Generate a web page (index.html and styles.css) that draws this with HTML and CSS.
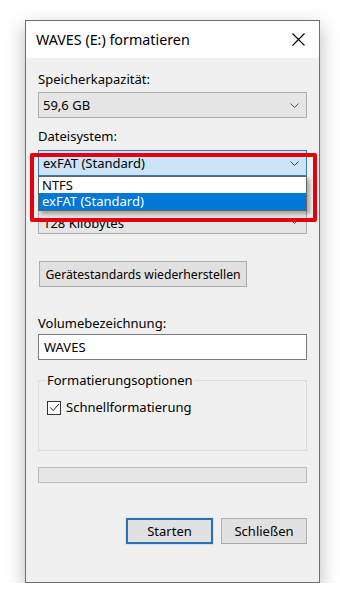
FILE: index.html
```html
<!DOCTYPE html>
<html lang="de">
<head>
<meta charset="utf-8">
<title>WAVES (E:) formatieren</title>
<link rel="stylesheet" href="styles.css">
</head>
<body>
<div class="window">
  <div class="titlebar">
    <span class="title">WAVES (E:) formatieren</span>
    <svg class="close" width="13" height="13" viewBox="0 0 13 13"><path d="M0.5 0.5 L12.5 12.5 M12.5 0.5 L0.5 12.5" stroke="#000" stroke-width="1.1" fill="none"/></svg>
  </div>
  <div class="content">
    <div class="label first">Speicherkapazität:</div>
    <div class="combo"><span>59,6 GB</span><svg class="chev" width="9" height="5" viewBox="0 0 9 5"><path d="M0.5 0.5 L4.5 4.5 L8.5 0.5" stroke="#555" fill="none"/></svg></div>

    <div class="label">Dateisystem:</div>
    <div class="combo-wrap">
      <div class="combo focused"><span>exFAT (Standard)</span><svg class="chev" width="9" height="5" viewBox="0 0 9 5"><path d="M0.5 0.5 L4.5 4.5 L8.5 0.5" stroke="#444" fill="none"/></svg></div>
      <ul class="dropdown">
        <li>NTFS</li>
        <li class="sel">exFAT (Standard)</li>
      </ul>
      <div class="highlight"></div>
    </div>

    <div class="label covered">Größe der Zuordnungseinheiten:</div>
    <div class="combo cluster"><span>128 Kilobytes</span><svg class="chev" width="9" height="5" viewBox="0 0 9 5"><path d="M0.5 0.5 L4.5 4.5 L8.5 0.5" stroke="#555" fill="none"/></svg></div>

    <button class="btn restore">Gerätestandards wiederherstellen</button>

    <div class="label vol">Volumebezeichnung:</div>
    <div class="input">WAVES</div>

    <fieldset class="group">
      <legend>Formatierungsoptionen</legend>
      <div class="check-row">
        <span class="checkbox"><svg width="11" height="11" viewBox="0 0 11 11"><path d="M1.2 5.4 L4.2 8.6 L10 1.8" stroke="#222" stroke-width="1" fill="none"/></svg></span>
        <span>Schnellformatierung</span>
      </div>
    </fieldset>

    <div class="progress"></div>

    <div class="actions">
      <button class="btn default">Starten</button>
      <button class="btn close-btn">Schließen</button>
    </div>
  </div>
</div>
</body>
</html>
```
FILE: styles.css
```css
html, body {
  margin: 0;
  padding: 0;
  background: #fff;
}
body {
  font-family: "Noto Sans", "Open Sans", sans-serif;
  font-size: 13px;
  color: #000;
  padding: 20px 0 0 25px;
}
.window {
  width: 295px;
  height: 563px;
  box-sizing: border-box;
  border: 1px solid #6e6e6e;
  background: #f0f0f0;
  box-shadow: 0 7px 18px rgba(0, 0, 0, 0.28);
}
.titlebar {
  height: 37px;
  background: #fff;
  display: flex;
  align-items: center;
  justify-content: space-between;
  padding: 0 14px 0 10px;
}
.title {
  font-size: 14.3px;
  line-height: 20px;
}
.close {
  display: block;
}
.content {
  padding: 13px 12px 0 12px;
}
.label {
  line-height: 17px;
  height: 17px;
  margin-top: 10px;
  white-space: nowrap;
}
.label.first {
  margin-top: 0;
}
.label.covered {
  visibility: hidden;
}
.combo {
  height: 26px;
  box-sizing: border-box;
  border: 1px solid #adadad;
  background: #e5e5e5;
  margin-top: 5px;
  display: flex;
  align-items: center;
  justify-content: space-between;
  padding: 0 7px 0 4px;
  line-height: 17px;
}
.label.first + .combo {
  margin-top: 4px;
}
.combo.focused {
  background: #cce4f7;
  border-color: #3f7ab6;
}
.combo.cluster span {
  padding-top: 5px;
}
.chev {
  display: block;
}
.combo-wrap {
  position: relative;
  margin-top: 5px;
}
.combo-wrap .combo {
  margin-top: 0;
}
.dropdown {
  position: absolute;
  left: 0;
  top: 26px;
  width: 100%;
  margin: 0;
  padding: 0;
  list-style: none;
  box-sizing: border-box;
  border: 1px solid #646464;
  background: #fff;
  box-shadow: 3px 3px 4px rgba(0, 0, 0, 0.3);
  z-index: 2;
}
.dropdown li {
  height: 16px;
  line-height: 16px;
  padding-left: 3px;
}
.dropdown li.sel {
  background: #0078d7;
  color: #fff;
  height: 17px;
  line-height: 17px;
}
.highlight {
  position: absolute;
  left: -8px;
  top: 3px;
  width: 287px;
  height: 69px;
  box-sizing: border-box;
  border: 4px solid #e5000e;
  border-radius: 2px;
  z-index: 3;
}
.btn {
  font-family: inherit;
  font-size: 13px;
  color: #000;
  height: 26px;
  box-sizing: border-box;
  border: 1px solid #adadad;
  background: #e1e1e1;
  padding: 0;
  line-height: 17px;
  display: block;
  white-space: nowrap;
}
.restore {
  margin-top: 27px;
  margin-left: 1px;
  width: 208px;
  font-size: 12.2px;
}
.label.vol {
  margin-top: 28px;
}
.input {
  margin-top: 2px;
  height: 26px;
  box-sizing: border-box;
  border: 1px solid #7a7a7a;
  background: #fff;
  padding: 0 5px;
  line-height: 24px;
}
.group {
  margin: 12px 0 0 0;
  padding: 0 7px 34px 8px;
  border: 1px solid #dcdcdc;
  min-width: 0;
}
.group legend {
  padding: 0 1px;
  margin-left: -1px;
  line-height: 17px;
}
.check-row {
  margin-top: 10px;
  display: flex;
  align-items: center;
  line-height: 17px;
  gap: 5px;
}
.checkbox {
  width: 14px;
  height: 14px;
  box-sizing: border-box;
  border: 1px solid #333;
  background: #fff;
  display: flex;
  align-items: center;
  justify-content: center;
}
.checkbox svg {
  display: block;
}
.progress {
  margin-top: 16px;
  height: 16px;
  box-sizing: border-box;
  border: 1px solid #bcbcbc;
  background: #e6e6e6;
}
.actions {
  margin-top: 35px;
  display: flex;
  justify-content: flex-end;
  gap: 8px;
}
.default {
  width: 87px;
  border: 2px solid #2a72b0;
  box-shadow: 0 0 0 1px #cfe6f8;
}
.close-btn {
  width: 86px;
}
```
